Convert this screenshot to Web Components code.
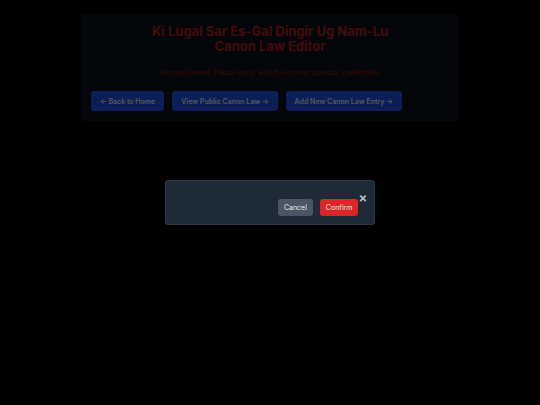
<!DOCTYPE html>
<html lang="en">
<head>
<meta charset="UTF-8">
<meta name="viewport" content="width=device-width, initial-scale=1.0">
<title>Canon Law Editor</title>
<style>
  body {
    margin: 0;
    padding: 14px 0;
    background-color: #000;
    color: #d1d5db;
    font-family: Inter, sans-serif;
    font-size: 7px;
  }
</style>
</head>
<body>
<editor-panel>
  <span slot="title">Ki Lugal Sar Es-Gal Dingir Ug Nam-Lu Canon Law Editor</span>
  <span slot="message">Access Denied. Please log in with the correct operator credentials.</span>
  <nav-link href="#home">← Back to Home</nav-link>
  <nav-link href="#public">View Public Canon Law →</nav-link>
  <nav-link href="#new">Add New Canon Law Entry →</nav-link>
</editor-panel>
<confirm-modal></confirm-modal>

<script>
// link styled as a button
class NavLink extends HTMLElement {
  constructor() {
    super();
    this.attachShadow({ mode: "open" });
    this.shadowRoot.innerHTML = `
      <style>
        :host {
          display: block;
        }

        a {
          display: block;
          padding: 6px 9px 4px;
          border-radius: 3px;
          background-color: #1d4ed8;
          color: #d1d5db;
          font-weight: 600;
          line-height: 10px;
          text-decoration: none;
          white-space: nowrap;
        }

        a:hover {
          background-color: #1e40af;
        }
      </style>
      <a><slot></slot></a>
    `;
    this.shadowRoot.querySelector("a").href = this.getAttribute("href");
  }
}

// main panel: title, status message and links
class EditorPanel extends HTMLElement {
  constructor() {
    super();
    this.attachShadow({ mode: "open" });
    this.shadowRoot.innerHTML = `
      <style>
        :host {
          display: block;
          box-sizing: border-box;
          width: 70%;
          margin: 0 auto;
          padding: 10px;
          border-radius: 3px;
          background-color: #0d0f17;
        }

        h1 {
          max-width: 240px;
          margin: 0 auto 14px;
          color: #a51c1c;
          font-size: 13px;
          font-weight: 700;
          line-height: 15px;
          text-align: center;
        }

        p {
          margin: 0 0 13px;
          color: #8f1216;
          line-height: 10px;
          text-align: center;
        }

        nav {
          display: flex;
          flex-wrap: wrap;
          gap: 8px;
        }
      </style>
      <h1><slot name="title"></slot></h1>
      <p><slot name="message"></slot></p>
      <nav><slot></slot></nav>
    `;
  }
}

// confirmation dialog over a dark backdrop
class ConfirmModal extends HTMLElement {
  constructor() {
    super();
    this.attachShadow({ mode: "open" });
    this.shadowRoot.innerHTML = `
      <style>
        :host {
          position: fixed;
          inset: 0;
          display: flex;
          align-items: center;
          justify-content: center;
          background-color: rgba(0, 0, 0, 0.6);
        }

        :host([hidden]) {
          display: none;
        }

        .modal {
          display: flex;
          align-items: flex-start;
          justify-content: flex-end;
          box-sizing: border-box;
          width: 39%;
          padding: 11px 7px 8px;
          border: 1px solid #2f3a45;
          border-radius: 3px;
          background-color: #1f2a37;
        }

        .actions {
          display: flex;
          gap: 7px;
          padding-top: 7px;
        }

        button {
          border: none;
          border-radius: 3px;
          padding: 4px 6px;
          color: #e5e7eb;
          font-family: inherit;
          font-size: 7px;
          line-height: 9px;
          cursor: pointer;
        }

        .cancel {
          background-color: #4b5563;
        }

        .confirm {
          background-color: #dc2626;
        }

        .close {
          padding: 0;
          background: none;
          color: #b6bac1;
          font-size: 13px;
          font-weight: 700;
          line-height: 12px;
        }
      </style>
      <div class="modal" role="dialog" aria-modal="true" aria-label="Confirm">
        <div class="actions">
          <button type="button" class="cancel">Cancel</button>
          <button type="button" class="confirm">Confirm</button>
        </div>
        <button type="button" class="close" aria-label="Close">×</button>
      </div>
    `;

    this.shadowRoot.querySelectorAll("button").forEach((button) => {
      button.addEventListener("click", () => {
        this.hidden = true;
      });
    });
  }
}

customElements.define("nav-link", NavLink);
customElements.define("editor-panel", EditorPanel);
customElements.define("confirm-modal", ConfirmModal);
</script>
</body>
</html>
